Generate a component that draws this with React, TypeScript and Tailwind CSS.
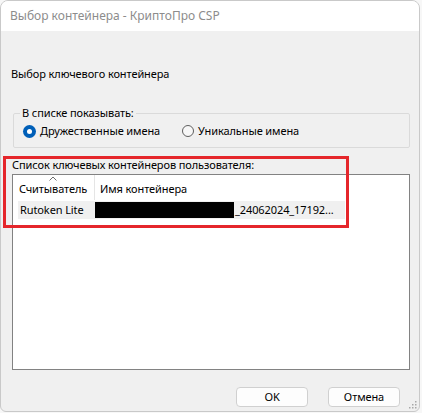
import React from "react";

const FONT = { fontFamily: '"Noto Sans", "Open Sans", sans-serif' };

function Radio({ checked, label, className = "" }: { checked: boolean; label: string; className?: string }) {
  return (
    <div className={`flex items-center h-4 ${className}`}>
      {checked ? (
        <span className="w-[13px] h-[13px] rounded-full bg-[#005fb8] flex items-center justify-center">
          <span className="w-[5px] h-[5px] rounded-full bg-white" />
        </span>
      ) : (
        <span className="w-[12px] h-[12px] rounded-full border border-[#5f5f5f] bg-[#f7f7f7]" />
      )}
      <span className="ml-[4px] text-black">{label}</span>
    </div>
  );
}

export default function App() {
  return (
    <div className="w-[422px] h-[413px] bg-[#f7f7f7]" style={FONT}>
      <div className="relative w-[420px] h-[412px] rounded-t-[8px] rounded-b-[6px] border border-[#c9c9c9] bg-[#f0f0f0] overflow-hidden flex flex-col">
        {/* title bar */}
        <div className="h-[30px] bg-white flex items-center pl-[9px] text-[12px] text-[#8c8c8c] leading-4">
          Выбор контейнера - КриптоПро CSP
        </div>

        <div className="flex flex-col text-[11px] tracking-[-0.1px] leading-4 text-black">
          <div className="pl-[10px] pt-[35px]">Выбор ключевого контейнера</div>

          <fieldset className="ml-[12px] mt-[23px] w-[397px] border border-[#dadada] rounded-[2px] pb-[8px]">
            <legend className="ml-[6px] px-[2px] leading-4">В списке показывать:</legend>
            <div className="flex pt-[2px] pl-[9px]">
              <Radio checked label="Дружественные имена" className="w-[159px]" />
              <Radio checked={false} label="Уникальные имена" />
            </div>
          </fieldset>

          <div className="pl-[11px] mt-[9px]">Список ключевых контейнеров пользователя:</div>

          <div className="ml-[11px] mt-[1px] w-[398px] h-[196px] border border-[#828282] bg-white flex flex-col">
            {/* header */}
            <div className="flex h-[25px]">
              <div className="relative w-[82px] border-r border-[#e5e5e5] flex items-end pb-[3px] pl-[6px]">
                <svg
                  className="absolute left-[36px] top-[1px]"
                  width="8"
                  height="5"
                  viewBox="0 0 8 5"
                  fill="none"
                  stroke="#6d6d6d"
                  strokeWidth="1"
                >
                  <path d="M0.5 4.5 L4 1 L7.5 4.5" />
                </svg>
                Считыватель
              </div>
              <div className="flex items-end pb-[3px] pl-[5px]">Имя контейнера</div>
            </div>
            {/* row */}
            <div className="ml-[5px] mt-[1px] w-[327px] h-[18px] bg-[#f0f0f0] flex items-center">
              <span className="w-[77px] pl-[2px]">Rutoken Lite</span>
              <span className="w-[139px] h-[16px] bg-black" />
              <span className="ml-[1px]">_24062024_17192...</span>
            </div>
          </div>

          <div className="flex justify-end gap-[20px] pr-[19px] mt-[17px]">
            <button className="w-[72px] h-[20px] rounded-[4px] border border-[#d0d0d0] bg-[#fdfdfd] leading-4">
              OK
            </button>
            <button className="w-[72px] h-[20px] rounded-[4px] border border-[#d0d0d0] bg-[#fdfdfd] leading-4">
              Отмена
            </button>
          </div>
        </div>

        {/* resize grip */}
        <svg className="absolute right-[2px] bottom-[2px]" width="9" height="9" viewBox="0 0 9 9" fill="#a8a8a8">
          <rect x="7" y="1" width="1.5" height="1.5" />
          <rect x="4" y="4" width="1.5" height="1.5" />
          <rect x="7" y="4" width="1.5" height="1.5" />
          <rect x="1" y="7" width="1.5" height="1.5" />
          <rect x="4" y="7" width="1.5" height="1.5" />
          <rect x="7" y="7" width="1.5" height="1.5" />
        </svg>

        {/* red annotation */}
        <div className="absolute left-[2px] top-[155px] w-[346px] h-[72px] border-[3px] border-[#e5262b]" />
      </div>
    </div>
  );
}
